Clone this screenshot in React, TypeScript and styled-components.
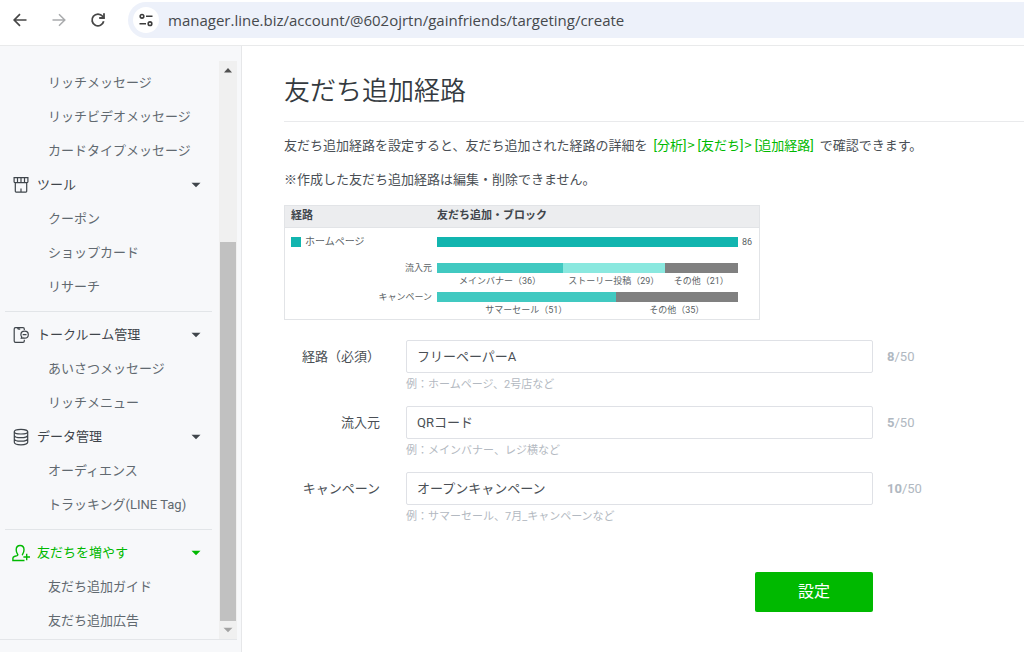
import React from "react";
import styled, { createGlobalStyle } from "styled-components";

const Global = createGlobalStyle`
  * { box-sizing: border-box; }
  body {
    margin: 0;
    background: #fff;
    color: #555b61;
    font: 13px/20px Roboto, "Noto Sans CJK JP", sans-serif;
    overflow: hidden;
  }
  a { color: inherit; text-decoration: none; }
  button { font: inherit; color: inherit; border: 0; background: none; padding: 0; }
  ul { list-style: none; margin: 0; padding: 0; }
  svg { display: block; flex: none; }
`;

const Window = styled.div`
  min-height: 100vh;
  display: flex;
  flex-direction: column;
`;

const BrowserBar = styled.header`
  height: 46px;
  display: flex;
  align-items: flex-start;
  padding: 2px 0 0 10px;
  border-bottom: 1px solid #e9eaeb;
  background: #fff;
`;

const NavButton = styled.button<{ $muted?: boolean }>`
  width: 20px;
  height: 36px;
  margin-right: 19px;
  display: grid;
  place-items: center;
  color: ${(p) => (p.$muted ? "#a9abad" : "#474747")};
`;

const AddressBar = styled.div`
  flex: 1;
  height: 36px;
  margin-left: 1px;
  padding-left: 5px;
  display: flex;
  align-items: center;
  gap: 9px;
  border-radius: 18px 0 0 18px;
  background: #edf1fa;
`;

const SiteButton = styled.button`
  width: 26px;
  height: 26px;
  border-radius: 50%;
  display: grid;
  place-items: center;
  background: #fff;
  color: #3c3c3c;
`;

const AddressInput = styled.input`
  flex: 1;
  min-width: 0;
  height: 30px;
  padding: 0;
  border: 0;
  outline: 0;
  background: none;
  color: #46494d;
  font: 15px/20px "Open Sans", sans-serif;
`;

const Body = styled.div`
  flex: 1;
  display: flex;
`;

const Sidebar = styled.aside`
  flex: 0 0 242px;
  padding-top: 15px;
  background: #f7f8fa;
  border-right: 1px solid #e6e7e9;
`;

const SidebarScroll = styled.div`
  display: flex;
  width: 237px;
  border-bottom: 1px solid #e4e6e9;
`;

const Menu = styled.nav`
  flex: 1;
  padding: 5px 7px 1px 5px;
`;

const MenuGroup = styled.section<{ $divided?: boolean }>`
  ${(p) => p.$divided && "border-top: 1px solid #e2e5e8; margin-top: 7px; padding-top: 6px;"}
`;

const GroupButton = styled.button<{ $active?: boolean }>`
  width: 100%;
  height: 34px;
  padding: 0 11px 0 7px;
  display: flex;
  align-items: center;
  gap: 7px;
  text-align: left;
  color: ${(p) => (p.$active ? "#00b900" : "#3f454b")};
`;

const GroupName = styled.span`
  flex: 1;
`;

const MenuLink = styled.a`
  height: 34px;
  padding-left: 43px;
  display: flex;
  align-items: center;
  white-space: nowrap;
  color: #616970;
`;

const Scrollbar = styled.div`
  width: 18px;
  display: flex;
  flex-direction: column;
  background: #f0f0f0;
`;

const ScrollButton = styled.button<{ $muted?: boolean }>`
  height: 18px;
  display: grid;
  place-items: center;
  color: ${(p) => (p.$muted ? "#a3a3a3" : "#505050")};
`;

const Track = styled.div`
  flex: 1;
  padding: 0 1px;
  display: flex;
  align-items: flex-end;
`;

const Thumb = styled.div`
  width: 100%;
  height: 70%;
  background: #c1c1c1;
`;

const Main = styled.main`
  flex: 1;
  min-width: 0;
  padding: 25px 0 40px 42px;
`;

const Title = styled.h1`
  margin: 0 0 13px;
  padding-bottom: 10px;
  border-bottom: 1px solid #e9eaec;
  color: #343a40;
  font-size: 26px;
  line-height: 40px;
  font-weight: 350;
`;

const Paragraph = styled.p`
  margin: 0 0 14px;
  color: #4a4f55;
`;

const LinkTrail = styled.span`
  margin: 0 6px;
  color: #00b900;
`;

const Separator = styled.span`
  margin: 0 3px 0 1px;
  font-family: "Noto Sans CJK JP", sans-serif;
`;

const Chart = styled.table`
  width: 476px;
  max-width: 100%;
  margin: 15px 0 20px;
  table-layout: fixed;
  border-collapse: separate;
  border-spacing: 0;
  border: 1px solid #e2e4e7;
  font-size: 9px;
  line-height: 10px;
  color: #5a5f65;

  th, td { padding: 0; vertical-align: top; }
`;

const ChartHead = styled.th<{ $first?: boolean }>`
  width: ${(p) => (p.$first ? "152px" : "auto")};
  height: 22px;
  background: #ecedef;
  border-bottom: 1px solid #e2e4e7;
  color: #3f454b;
  font-size: 11px;
  line-height: 20px;
  text-align: left;

  && { padding-left: ${(p) => (p.$first ? "6px" : "0")}; }
`;

const RouteName = styled.th`
  height: 35px;
  font-size: 10px;
  font-weight: 400;
  text-align: left;

  && { padding: 9px 0 0 6px; }
`;

const RouteLabel = styled.span`
  display: flex;
  align-items: center;
  gap: 4px;

  &::before { content: ""; width: 10px; height: 10px; background: #12b5af; }
`;

const TotalCell = styled.td`
  && { padding-top: 9px; }
`;

const SourceName = styled.th`
  height: 29px;
  font-weight: 400;
  text-align: right;

  && { padding-right: 5px; }
  tr:last-child > & { height: 27px; }
`;

const BarLine = styled.div`
  display: flex;
  align-items: center;
  gap: 4px;
`;

const Bar = styled.div`
  width: 301px;
  display: flex;
`;

const Segment = styled.div<{ $value: number; $color: string }>`
  flex: ${(p) => p.$value} 1 0;
  min-width: 0;
  text-align: center;
  white-space: nowrap;

  &::before {
    content: "";
    display: block;
    height: 10px;
    margin-bottom: 3px;
    background: ${(p) => p.$color};
  }
`;

const TotalBar = styled.div`
  width: 301px;
  height: 10px;
  background: #12b5af;
`;

const Form = styled.form`
  max-width: 589px;
`;

const Field = styled.div`
  display: grid;
  grid-template-columns: 96px minmax(0, 1fr);
  column-gap: 26px;
  row-gap: 2px;
  margin-bottom: 11px;
`;

const FieldLabel = styled.label`
  line-height: 33px;
  text-align: right;
  white-space: nowrap;
  color: #4a4f55;
`;

const FieldControl = styled.div`
  display: flex;
  align-items: center;
`;

const TextInput = styled.input`
  width: 100%;
  height: 33px;
  padding: 0 10px 2px;
  border: 1px solid #dfe1e6;
  border-radius: 2px;
  outline: 0;
  background: #fff;
  color: #4a4f55;
  font: inherit;
`;

const Counter = styled.output`
  width: 60px;
  margin: 0 -74px 0 14px;
  flex: none;
  color: #b0b8c1;
`;

const Hint = styled.small`
  grid-column: 2;
  font-size: 11px;
  line-height: 20px;
  color: #b3b9c1;
`;

const Actions = styled.div`
  padding-top: 34px;
  display: flex;
  justify-content: flex-end;
`;

const SubmitButton = styled.button`
  width: 118px;
  height: 40px;
  border-radius: 2px;
  background: #00b900;
  color: #fff;
  font-size: 16px;
`;

const iconProps = {
  width: 18,
  height: 18,
  viewBox: "0 0 18 18",
  fill: "none",
  stroke: "currentColor",
  strokeWidth: 1.2,
  "aria-hidden": true,
} as const;

const ShopIcon = () => (
  <svg {...iconProps}>
    <path d="M2.100 1.700h13.800v4.100c0 .5-.3.800-.8.800H2.900c-.5 0-.8-.3-.8-.8zM5.500 1.700v4.900M9 1.700v4.900M12.500 1.700v4.900M3.300 6.600v8.700c0 .5.300.8.800.8h9.800c.5 0 .8-.3.800-.8V6.600M9 16v-3.600" />
  </svg>
);

const TalkIcon = () => (
  <svg {...iconProps}>
    <path d="M12.300 4V3c0-.8-.5-1.300-1.300-1.300H3.500c-.8 0-1.300.5-1.300 1.300v12c0 .8.500 1.300 1.300 1.300H11c.8 0 1.300-.5 1.300-1.300v-1.200M5.600 1.700c0 1 .4 1.400 1.200 1.400h1.400" />
    <path d="M12.600 5.200c2.100 0 3.700 1.500 3.700 3.500s-1.600 3.500-3.700 3.500c-.6 0-1.100-.1-1.600-.3l-1.700.4.4-1.500c-.5-.6-.8-1.300-.8-2.100 0-2 1.600-3.500 3.700-3.500zM10.700 8.700h3.800" />
  </svg>
);

const DataIcon = () => (
  <svg {...iconProps}>
    <ellipse cx="9" cy="3.700" rx="6.700" ry="2.300" />
    <path d="M2.300 3.700v10.600c0 1.400 3 2.500 6.700 2.500s6.700-1.100 6.700-2.500V3.700M2.300 7.200c0 1.400 3 2.500 6.700 2.500s6.700-1.100 6.700-2.500M2.300 10.700c0 1.400 3 2.500 6.700 2.500s6.700-1.100 6.700-2.500" />
  </svg>
);

const FriendIcon = () => (
  <svg {...iconProps} strokeWidth={1.400}>
    <path d="M12.500 16.500H.9v-2.300c0-.9.500-1.400 1.400-1.700l2.800-.9c.8-.3.900-1 .4-1.600C4.600 8.800 4.200 7.400 4.200 5.700c0-2.500 1.500-4.200 3.900-4.200S12 3.200 12 5.700c0 1.700-.4 3.100-1.300 4.300-.4.500-.4.900 0 1.300M14.700 9.700v6.600M11.400 13h6.600" />
  </svg>
);

const Caret = ({ up }: { up?: boolean }) => (
  <svg width="10" height="6" viewBox="0 0 10 6" aria-hidden="true">
    <path d={up ? "M1 5.500 5 1l4 4.500z" : "M.5.8h9L5 5.300z"} fill="currentColor" />
  </svg>
);

const BackIcon = () => (
  <svg width="14" height="14" viewBox="0 0 14 14" fill="none" stroke="currentColor" strokeWidth="1.700" aria-hidden="true">
    <path d="M13.500 7H1.500M7 1.200 1.200 7 7 12.800" />
  </svg>
);

const ForwardIcon = () => (
  <svg width="14" height="14" viewBox="0 0 14 14" fill="none" stroke="currentColor" strokeWidth="1.500" aria-hidden="true">
    <path d="M.5 7h12M7 1.200 12.800 7 7 12.800" />
  </svg>
);

const ReloadIcon = () => (
  <svg width="16" height="16" viewBox="0 0 16 16" fill="none" stroke="currentColor" strokeWidth="1.800" aria-hidden="true">
    <path d="M13.700 9.300A5.900 5.900 0 1 1 12.600 4.300L14 6" />
    <path d="M14 1.200V6H9.200" />
  </svg>
);

const TuneIcon = () => (
  <svg width="14" height="14" viewBox="0 0 14 14" fill="none" stroke="currentColor" strokeWidth="1.600" aria-hidden="true">
    <circle cx="3" cy="3.300" r="1.800" />
    <circle cx="11" cy="10.700" r="1.800" />
    <path d="M7 3.300h6.500M.5 10.700H7" />
  </svg>
);

type Group = {
  name?: string;
  icon?: React.ReactNode;
  divided?: boolean;
  active?: boolean;
  items: string[];
};

const groups: Group[] = [
  { items: ["リッチメッセージ", "リッチビデオメッセージ", "カードタイプメッセージ"] },
  { name: "ツール", icon: <ShopIcon />, items: ["クーポン", "ショップカード", "リサーチ"] },
  { name: "トークルーム管理", icon: <TalkIcon />, divided: true, items: ["あいさつメッセージ", "リッチメニュー"] },
  { name: "データ管理", icon: <DataIcon />, items: ["オーディエンス", "トラッキング(LINE Tag)"] },
  { name: "友だちを増やす", icon: <FriendIcon />, divided: true, active: true, items: ["友だち追加ガイド", "友だち追加広告"] },
];

const breakdown = [
  {
    name: "流入元",
    parts: [
      { name: "メインバナー", value: 36, color: "#41c9c1" },
      { name: "ストーリー投稿", value: 29, color: "#8ae8df" },
      { name: "その他", value: 21, color: "#808080" },
    ],
  },
  {
    name: "キャンペーン",
    parts: [
      { name: "サマーセール", value: 51, color: "#41c9c1" },
      { name: "その他", value: 35, color: "#808080" },
    ],
  },
];

const fields = [
  { id: "route", label: "経路（必須）", value: "フリーペーパーA", hint: "例：ホームページ、2号店など" },
  { id: "source", label: "流入元", value: "QRコード", hint: "例：メインバナー、レジ横など" },
  { id: "campaign", label: "キャンペーン", value: "オープンキャンペーン", hint: "例：サマーセール、7月_キャンペーンなど" },
];

export default function App() {
  return (
    <Window>
      <Global />
      <BrowserBar>
        <NavButton aria-label="戻る"><BackIcon /></NavButton>
        <NavButton aria-label="進む" $muted><ForwardIcon /></NavButton>
        <NavButton aria-label="再読み込み"><ReloadIcon /></NavButton>
        <AddressBar>
          <SiteButton aria-label="サイト情報"><TuneIcon /></SiteButton>
          <AddressInput
            aria-label="アドレス"
            defaultValue="manager.line.biz/account/@602ojrtn/gainfriends/targeting/create"
          />
        </AddressBar>
      </BrowserBar>
      <Body>
        <Sidebar>
          <SidebarScroll>
            <Menu>
              {groups.map((group, i) => (
                <MenuGroup key={i} $divided={group.divided}>
                  {group.name && (
                    <GroupButton $active={group.active} aria-expanded="true">
                      {group.icon}
                      <GroupName>{group.name}</GroupName>
                      <Caret />
                    </GroupButton>
                  )}
                  <ul>
                    {group.items.map((item) => (
                      <li key={item}><MenuLink href="#">{item}</MenuLink></li>
                    ))}
                  </ul>
                </MenuGroup>
              ))}
            </Menu>
            <Scrollbar>
              <ScrollButton aria-label="上へ"><Caret up /></ScrollButton>
              <Track><Thumb /></Track>
              <ScrollButton aria-label="下へ" $muted><Caret /></ScrollButton>
            </Scrollbar>
          </SidebarScroll>
        </Sidebar>
        <Main>
          <Title>友だち追加経路</Title>
          <Paragraph>
            友だち追加経路を設定すると、友だち追加された経路の詳細を
            <LinkTrail>
              <a href="#">[分析]</a>
              <Separator>&gt;</Separator>
              <a href="#">[友だち]</a>
              <Separator>&gt;</Separator>
              <a href="#">[追加経路]</a>
            </LinkTrail>
            で確認できます。
          </Paragraph>
          <Paragraph>※作成した友だち追加経路は編集・削除できません。</Paragraph>
          <Chart>
            <thead>
              <tr>
                <ChartHead $first scope="col">経路</ChartHead>
                <ChartHead scope="col">友だち追加・ブロック</ChartHead>
              </tr>
            </thead>
            <tbody>
              <tr>
                <RouteName scope="row"><RouteLabel>ホームページ</RouteLabel></RouteName>
                <TotalCell><BarLine><TotalBar />86</BarLine></TotalCell>
              </tr>
              {breakdown.map((row) => (
                <tr key={row.name}>
                  <SourceName scope="row">{row.name}</SourceName>
                  <td>
                    <Bar>
                      {row.parts.map((part) => (
                        <Segment key={part.name} $value={part.value} $color={part.color}>
                          {part.name}（{part.value}）
                        </Segment>
                      ))}
                    </Bar>
                  </td>
                </tr>
              ))}
            </tbody>
          </Chart>
          <Form onSubmit={(e) => e.preventDefault()}>
            {fields.map((field) => (
              <Field key={field.id}>
                <FieldLabel htmlFor={field.id}>{field.label}</FieldLabel>
                <FieldControl>
                  <TextInput id={field.id} defaultValue={field.value} />
                  <Counter htmlFor={field.id}><b>{field.value.length}</b>/50</Counter>
                </FieldControl>
                <Hint>{field.hint}</Hint>
              </Field>
            ))}
            <Actions><SubmitButton type="submit">設定</SubmitButton></Actions>
          </Form>
        </Main>
      </Body>
    </Window>
  );
}
